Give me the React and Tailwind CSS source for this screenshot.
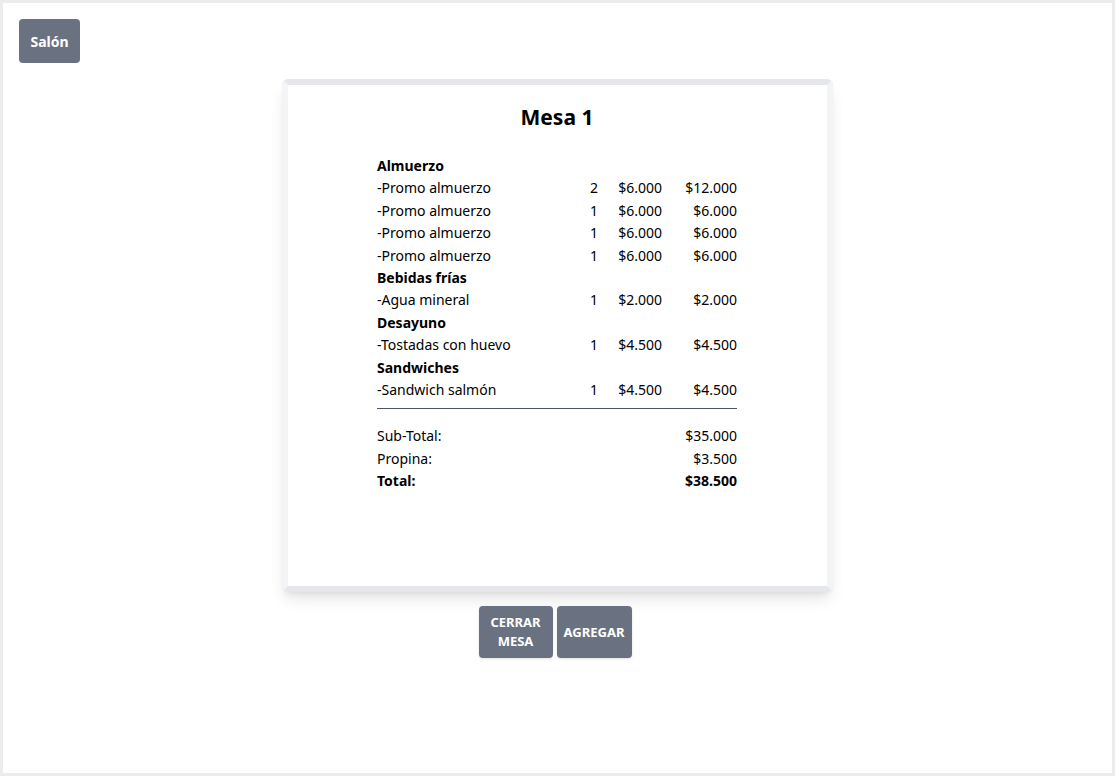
import React from 'react';

const pedido = [
  { categoria: 'Almuerzo', items: [
    { nombre: 'Promo almuerzo', cant: 2, precio: '$6.000', total: '$12.000' },
    { nombre: 'Promo almuerzo', cant: 1, precio: '$6.000', total: '$6.000' },
    { nombre: 'Promo almuerzo', cant: 1, precio: '$6.000', total: '$6.000' },
    { nombre: 'Promo almuerzo', cant: 1, precio: '$6.000', total: '$6.000' },
  ] },
  { categoria: 'Bebidas frías', items: [
    { nombre: 'Agua mineral', cant: 1, precio: '$2.000', total: '$2.000' },
  ] },
  { categoria: 'Desayuno', items: [
    { nombre: 'Tostadas con huevo', cant: 1, precio: '$4.500', total: '$4.500' },
  ] },
  { categoria: 'Sandwiches', items: [
    { nombre: 'Sandwich salmón', cant: 1, precio: '$4.500', total: '$4.500' },
  ] },
];

function App() {
  return (
    <div
      className="h-[776px] border-[3px] border-[#ececec] bg-white p-4 text-black"
      style={{ fontFamily: '"Noto Sans", "Open Sans", sans-serif' }}>
      <button className="w-[61px] h-[44px] bg-gray-500 text-white font-bold text-[14px] rounded-[4px]">
        Salón
      </button>

      <div className="flex flex-col items-center mt-4 pr-[1px]">
        <div className="w-[551px] h-[513px] bg-white rounded-md border-[6px] border-y-gray-200 border-x-gray-100 shadow-lg">
          <h1 className="text-center font-bold text-[21px] leading-[30px] mt-[17px]">Mesa 1</h1>

          <div className="w-[360px] mx-auto mt-[23px] text-[14px] leading-[22.4px]">
            {pedido.map((grupo) => (
              <div key={grupo.categoria}>
                <p className="font-bold">{grupo.categoria}</p>
                {grupo.items.map((item, i) => (
                  <div key={i} className="grid grid-cols-[1fr_20px_64px_75px]">
                    <span>-{item.nombre}</span>
                    <span className="text-right">{item.cant}</span>
                    <span className="text-right">{item.precio}</span>
                    <span className="text-right">{item.total}</span>
                  </div>
                ))}
              </div>
            ))}

            <hr className="border-t border-gray-600 mt-[7px] mb-[16px]" />

            <div className="flex justify-between"><span>Sub-Total:</span><span>$35.000</span></div>
            <div className="flex justify-between"><span>Propina:</span><span>$3.500</span></div>
            <div className="flex justify-between font-bold"><span>Total:</span><span>$38.500</span></div>
          </div>
        </div>

        <div className="flex gap-1 mt-[14px] mr-[4px]">
          <button className="w-[74px] h-[52px] bg-gray-500 text-white font-bold text-[13px] leading-[19px] rounded-[4px] shadow-sm">
            CERRAR<br />MESA
          </button>
          <button className="w-[75px] h-[52px] bg-gray-500 text-white font-bold text-[13px] leading-[19px] rounded-[4px] shadow-sm">
            AGREGAR
          </button>
        </div>
      </div>
    </div>
  );
}

export default App;
